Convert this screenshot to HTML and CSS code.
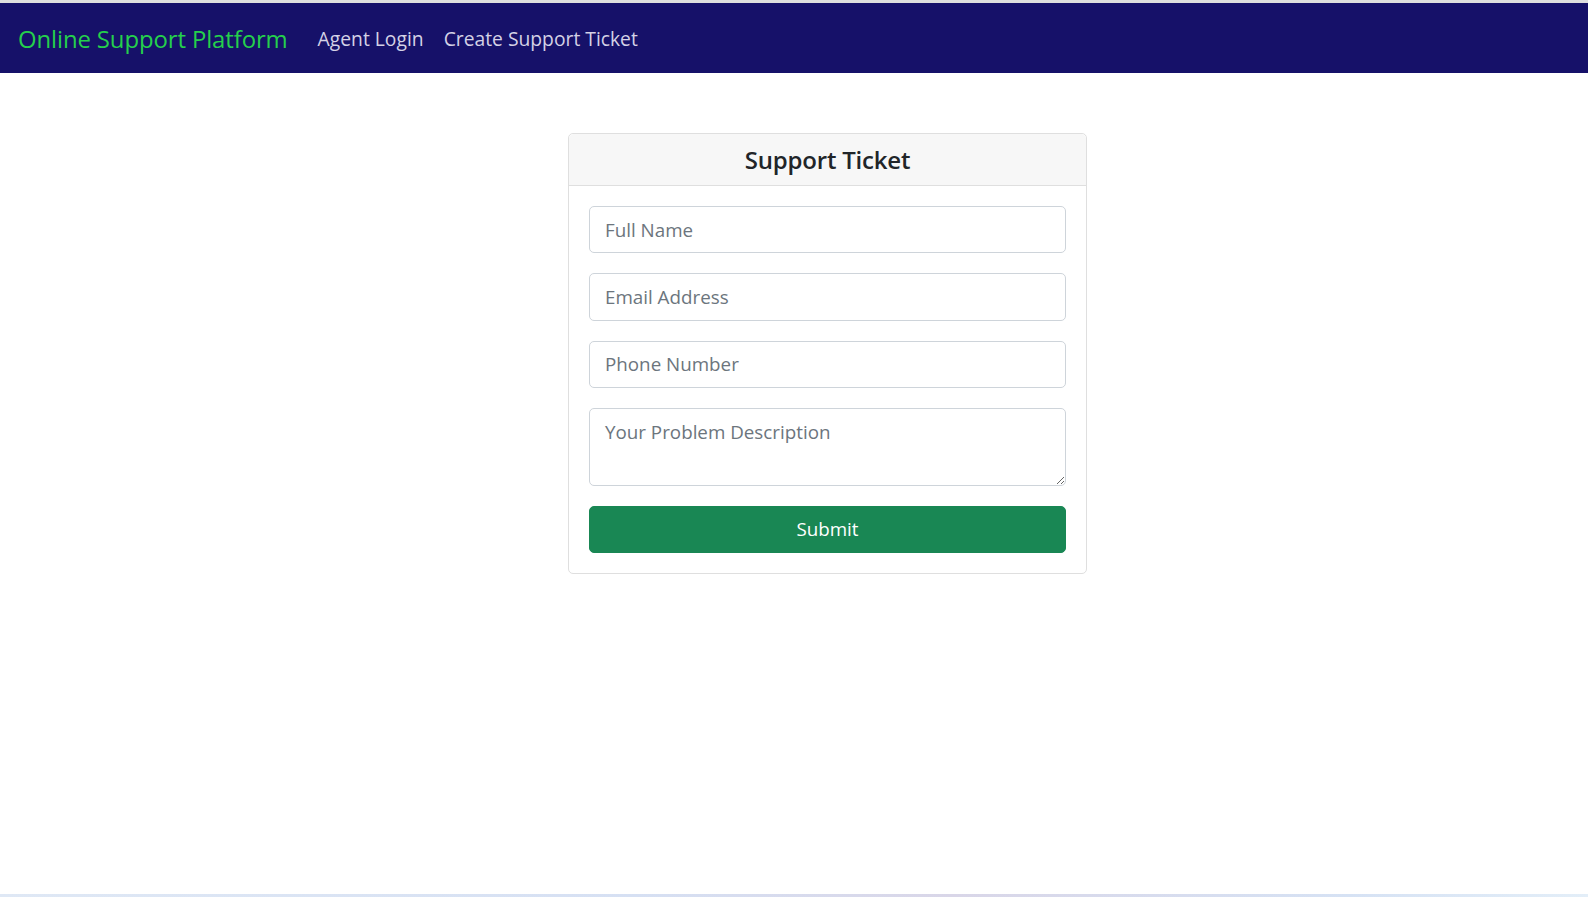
FILE: index.html
```html
<!DOCTYPE html>
<html lang="en">
<head>
<meta charset="utf-8">
<title>Online Support Platform</title>
<link rel="stylesheet" href="styles.css">
</head>
<body>
<div class="top-strip"></div>
<nav class="navbar">
  <a class="brand" href="#">Online Support Platform</a>
  <ul class="nav">
    <li><a class="nav-link" href="#">Agent Login</a></li>
    <li><a class="nav-link" href="#">Create Support Ticket</a></li>
  </ul>
</nav>
<main class="main">
  <div class="card">
    <div class="card-header"><h5 class="card-title">Support Ticket</h5></div>
    <form class="card-body">
      <input class="field" type="text" placeholder="Full Name">
      <input class="field" type="email" placeholder="Email Address">
      <input class="field" type="text" placeholder="Phone Number">
      <textarea class="field area" rows="2" placeholder="Your Problem Description"></textarea>
      <button class="submit" type="button">Submit</button>
    </form>
  </div>
</main>
<div class="bottom-strip"></div>
</body>
</html>
```
FILE: styles.css
```css
* { box-sizing: border-box; }
html, body { height: 100%; }
body {
  margin: 0;
  display: flex;
  flex-direction: column;
  background: #ffffff;
  font-family: "Open Sans", "Noto Sans", sans-serif;
  color: #212529;
}
.top-strip { height: 3px; background: #dedede; flex: none; }
.navbar {
  flex: none;
  height: 70px;
  background: #161169;
  display: flex;
  align-items: center;
  padding: 1px 16px 0 18px;
}
.brand {
  font-size: 23.9px;
  line-height: 30px;
  color: #25d04c;
  text-decoration: none;
  margin-right: 20px;
  letter-spacing: -0.1px;
}
.nav {
  list-style: none;
  margin: 0;
  padding: 0;
  display: flex;
}
.nav-link {
  display: block;
  padding: 10px 10px;
  font-size: 19.3px;
  line-height: 30px;
  color: rgba(240, 238, 250, 0.88);
  text-decoration: none;
}
.main {
  flex: 1;
  padding: 60px 0 0 568px;
}
.card {
  width: 519px;
  border: 1px solid #dfdfdf;
  border-radius: 5px;
  background: #fff;
}
.card-header {
  background: #f7f7f7;
  border-bottom: 1px solid #dfdfdf;
  border-radius: 5px 5px 0 0;
  padding: 10px 20px;
  text-align: center;
}
.card-title {
  margin: 0;
  font-size: 24px;
  line-height: 31px;
  font-weight: 600;
  letter-spacing: -0.2px;
  color: #212529;
}
.card-body {
  padding: 20px 20px 20px;
  display: flex;
  flex-direction: column;
  gap: 20px;
}
.field {
  display: block;
  width: 100%;
  margin: 0;
  padding: 7.7px 15px;
  font-family: inherit;
  font-size: 18.8px;
  line-height: 30px;
  color: #212529;
  border: 1px solid #ced4da;
  border-radius: 5px;
  background: #fff;
}
.field::placeholder { color: #6c757d; opacity: 1; }
.area { height: 77.5px; resize: vertical; }
.submit {
  display: block;
  width: 100%;
  padding: 7.7px 15px;
  font-family: inherit;
  font-size: 18.8px;
  line-height: 30px;
  color: #fff;
  background: #198754;
  border: 1px solid #198754;
  border-radius: 5px;
}
.bottom-strip {
  flex: none;
  height: 3px;
  background: linear-gradient(90deg, #dfe8f5, #d6e0f3 40%, #d9d6e8 60%, #d6e2f4 85%, #e3eef8);
}
```
